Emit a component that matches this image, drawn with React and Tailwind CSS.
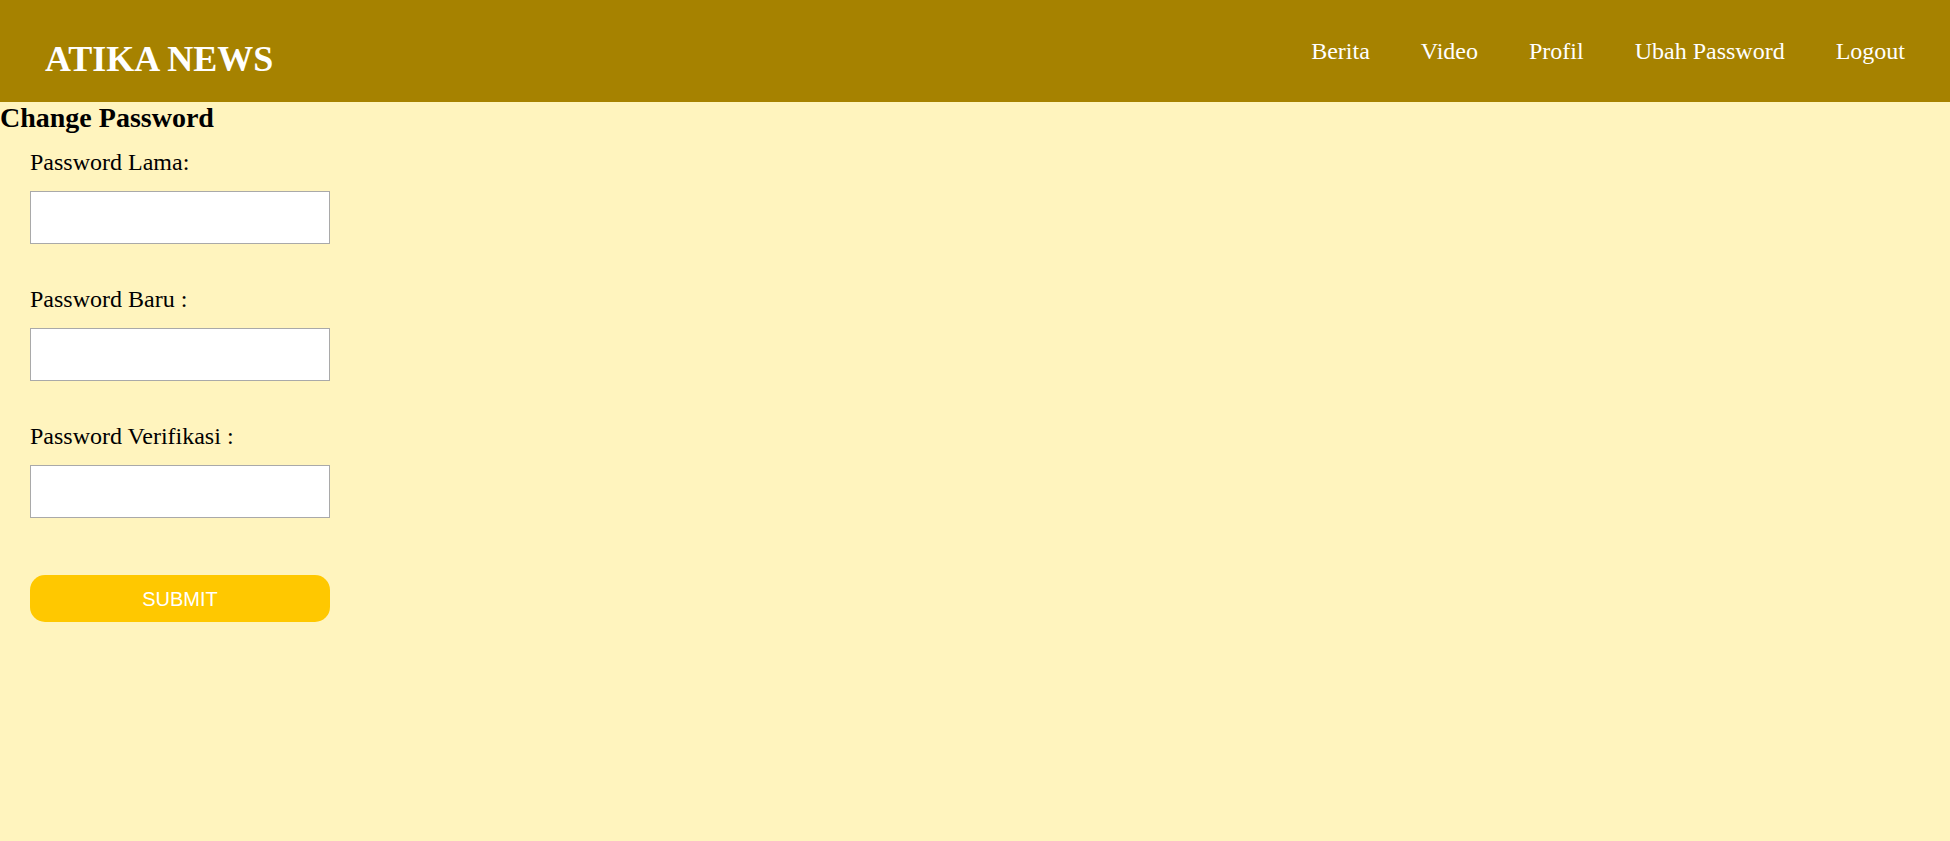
import { useState } from "react";

const navLinks = ["Berita", "Video", "Profil", "Ubah Password", "Logout"];

function App() {
  const [form, setForm] = useState({
    oldPassword: "",
    newPassword: "",
    verifyPassword: "",
  });

  function handleChange(event) {
    setForm({ ...form, [event.target.name]: event.target.value });
  }

  return (
    <div className="min-h-[841px] bg-[#fff4be] font-['Liberation_Serif','Times_New_Roman',serif] text-black">
      <header className="flex h-[102px] items-start justify-between bg-[#a68200] pl-[45px] pr-[45px]">
        <h1 className="pt-[39px] text-[36px] font-bold leading-[40px] text-white">
          ATIKA NEWS
        </h1>

        <nav className="flex gap-[51px] pt-[37px]">
          {navLinks.map((link) => (
            <a
              key={link}
              href="#"
              className="text-[24px] leading-[28px] text-white"
            >
              {link}
            </a>
          ))}
        </nav>
      </header>

      <main>
        <h2 className="text-[28px] font-bold leading-[32px]">
          Change Password
        </h2>

        <form className="flex w-[330px] flex-col pl-[30px] pt-[14px]">
          <PasswordField
            label="Password Lama:"
            name="oldPassword"
            value={form.oldPassword}
            onChange={handleChange}
          />

          <div className="mt-[41px]">
            <PasswordField
              label="Password Baru :"
              name="newPassword"
              value={form.newPassword}
              onChange={handleChange}
            />
          </div>

          <div className="mt-[41px]">
            <PasswordField
              label="Password Verifikasi :"
              name="verifyPassword"
              value={form.verifyPassword}
              onChange={handleChange}
            />
          </div>

          <button
            type="button"
            className="mt-[57px] h-[47px] w-[300px] rounded-[15px] bg-[#ffc800] font-['Liberation_Sans',Arial,sans-serif] text-[20px] text-white"
          >
            SUBMIT
          </button>
        </form>
      </main>
    </div>
  );
}

function PasswordField({ label, name, value, onChange }) {
  return (
    <label className="flex flex-col">
      <span className="text-[24px] leading-[28px]">{label}</span>

      <input
        type="password"
        name={name}
        value={value}
        onChange={onChange}
        className="mt-[15px] h-[53px] w-[300px] border border-[#a9a9a9] bg-white px-2 outline-none"
      />
    </label>
  );
}

export default App;
